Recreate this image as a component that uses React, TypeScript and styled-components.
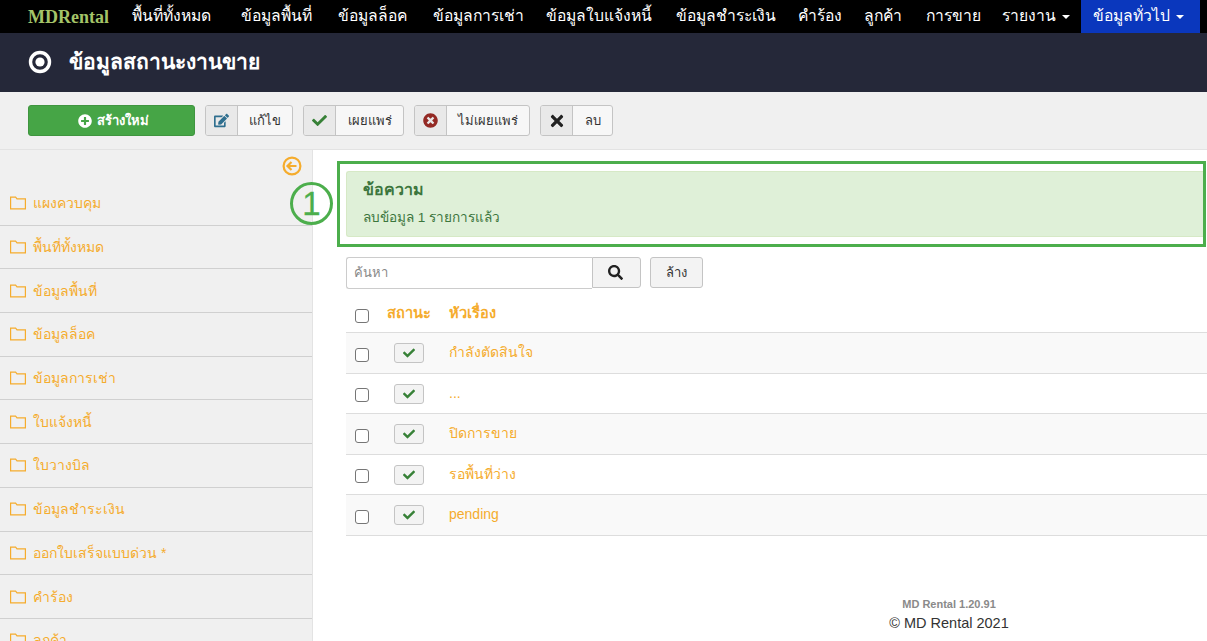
import styled, { createGlobalStyle } from "styled-components";
import { FaCheck, FaEdit, FaPlusCircle, FaSearch, FaTimes, FaTimesCircle } from "react-icons/fa";
import type { ReactNode } from "react";

const GlobalStyle = createGlobalStyle`
  html, body {
    margin: 0;
    height: 641px;
    overflow: hidden;
    background: #fff;
    font-family: "Liberation Sans", "Noto Sans", Arial, sans-serif;
    font-size: 13px;
    color: #333;
  }
  * { box-sizing: border-box; }
`;

const Page = styled.div`
  width: 1207px;
  height: 641px;
  overflow: hidden;
  display: flex;
  flex-direction: column;
`;

const NavBar = styled.nav`
  height: 33px;
  background: #000;
  display: flex;
  align-items: stretch;
  padding-left: 28px;
  flex: none;
`;

const Brand = styled.a`
  font-family: "Liberation Serif", serif;
  font-weight: 700;
  font-size: 18px;
  color: #a4c468;
  line-height: 35px;
  width: 92px;
`;

const NavItem = styled.a<{ $active?: boolean; $width: number }>`
  width: ${(p) => p.$width}px;
  color: #fff;
  font-size: 15.7px;
  line-height: 32px;
  white-space: nowrap;
  padding-left: ${(p) => (p.$active ? 12 : 11.5)}px;
  background: ${(p) => (p.$active ? "#0a37bd" : "transparent")};
`;

const Caret = styled.span`
  display: inline-block;
  margin-left: 6px;
  vertical-align: middle;
  border-top: 4px solid #fff;
  border-left: 4px solid transparent;
  border-right: 4px solid transparent;
`;

const TitleBar = styled.header`
  height: 59px;
  background: #252839;
  display: flex;
  align-items: center;
  padding: 0 0 2px 28px;
  gap: 17px;
  flex: none;
`;

const Title = styled.h1`
  margin: 0;
  font-size: 21px;
  font-weight: 700;
  color: #fff;
`;

const Toolbar = styled.div`
  height: 58px;
  background: #f0f0f0;
  border-bottom: 1px solid #e3e3e3;
  display: flex;
  align-items: center;
  padding-left: 28px;
  gap: 10px;
  flex: none;
`;

const CreateButton = styled.button`
  width: 167px;
  height: 31px;
  background: #46a546;
  border: 1px solid #3f953f;
  border-radius: 3px;
  color: #fff;
  font: 700 13px "Liberation Sans", sans-serif;
  display: flex;
  align-items: center;
  justify-content: center;
  gap: 5px;
  padding: 0 0 0 3px;
`;

const ActionButton = styled.button`
  height: 31px;
  display: flex;
  align-items: stretch;
  padding: 0;
  background: #f7f7f7;
  border: 1px solid #c4c4c4;
  border-radius: 3px;
  font: 13px "Liberation Sans", sans-serif;
  color: #333;
  overflow: hidden;
`;

const ActionIcon = styled.span<{ $color: string }>`
  width: 32px;
  background: #e9e9e9;
  border-right: 1px solid #c4c4c4;
  color: ${(p) => p.$color};
  display: flex;
  align-items: center;
  justify-content: center;
  font-size: 15px;
`;

const ActionLabel = styled.span<{ $width: number }>`
  width: ${(p) => p.$width}px;
  display: flex;
  align-items: center;
  justify-content: center;
`;

const Body = styled.div`
  flex: 1;
  display: flex;
  min-height: 0;
  position: relative;
`;

const Sidebar = styled.aside`
  width: 313px;
  flex: none;
  background: #f0f0f0;
  border-right: 1px solid #e3e3e3;
  position: relative;
  padding-top: 32px;
`;

const CollapseIcon = styled.svg`
  position: absolute;
  top: 6px;
  right: 10px;
`;

const SideItem = styled.a`
  height: 43.7px;
  display: flex;
  align-items: center;
  gap: 7px;
  padding-left: 10px;
  color: #f5ac2d;
  font-size: 14px;
  border-bottom: 1px solid #d0d0d0;
`;

const Main = styled.main`
  flex: 1;
  min-width: 0;
  padding: 11px 0 0 24px;
`;

const AlertFrame = styled.div`
  margin-right: 1px;
  border: 3px solid #4cae4c;
  padding: 7px 0 7px 6px;
`;

const Alert = styled.div`
  height: 66px;
  background: #dff0d8;
  border: 1px solid #d6e9c6;
  border-right: 0;
  border-radius: 3px 0 0 3px;
  color: #3c763d;
  padding: 8px 16px;
`;

const AlertTitle = styled.div`
  font-size: 16px;
  font-weight: 700;
  line-height: 20px;
  margin-bottom: 8px;
`;

const AlertText = styled.div`
  font-size: 13.6px;
  line-height: 20px;
`;

const Marker = styled.div`
  position: absolute;
  left: 290px;
  top: 32px;
  width: 43px;
  height: 43px;
  border: 3px solid #4cae4c;
  border-radius: 50%;
  color: #4cae4c;
  font-size: 33px;
  line-height: 37px;
  text-align: center;
  -webkit-text-stroke: 0.3px #4cae4c;
`;

const Content = styled.div`
  padding-left: 9px;
`;

const SearchRow = styled.div`
  display: flex;
  align-items: flex-start;
  margin-top: 10px;
`;

const SearchInput = styled.div`
  width: 246px;
  height: 32px;
  border: 1px solid #ccc;
  border-right: 0;
  border-radius: 3px 0 0 3px;
  color: #888;
  font-size: 13px;
  line-height: 30px;
  padding-left: 7px;
`;

const SearchButton = styled.button`
  width: 49px;
  height: 31px;
  background: #f3f3f3;
  border: 1px solid #c4c4c4;
  border-radius: 0 3px 3px 0;
  display: flex;
  align-items: center;
  justify-content: center;
  color: #222;
  font-size: 15px;
  padding: 0 2px 0 0;
`;

const ClearButton = styled.button`
  width: 53px;
  height: 31px;
  margin-left: 9px;
  background: #f3f3f3;
  border: 1px solid #c4c4c4;
  border-radius: 3px;
  font: 13px "Liberation Sans", sans-serif;
  color: #333;
  padding: 0;
`;

const Check = styled.span<{ $head?: boolean }>`
  display: block;
  width: 14px;
  height: 14px;
  margin: ${(p) => (p.$head ? "6px" : "3px")} 0 0 9px;
  background: #fff;
  border: 1px solid #767676;
  border-radius: 3px;
`;

const HeadRow = styled.div`
  height: 44px;
  display: grid;
  grid-template-columns: 41px 62px 1fr;
  align-items: center;
  border-bottom: 1px solid #ddd;
  padding-top: 4px;
  color: #f5ac2d;
  font-size: 14.6px;
  font-weight: 700;
`;

const Row = styled.div<{ $shaded?: boolean; $height: number }>`
  height: ${(p) => p.$height}px;
  display: grid;
  grid-template-columns: 41px 62px 1fr;
  align-items: center;
  border-bottom: 1px solid #ddd;
  background: ${(p) => (p.$shaded ? "#f9f9f9" : "#fff")};
  color: #f5ac2d;
  font-size: 14px;
`;

const RowTitle = styled.span`
  margin-bottom: 2px;
`;

const StateButton = styled.span`
  width: 30px;
  height: 20px;
  margin-left: 7px;
  background: #f3f3f3;
  border: 1px solid #c4c4c4;
  border-radius: 3px;
  color: #378137;
  font-size: 12px;
  display: flex;
  align-items: center;
  justify-content: center;
`;

const Footer = styled.footer`
  margin-top: 61px;
  padding-left: 354px;
  text-align: center;
`;

const Version = styled.div`
  font-size: 11px;
  font-weight: 700;
  color: #8a8a8a;
  line-height: 15px;
`;

const Copyright = styled.div`
  font-size: 14.5px;
  color: #333;
  line-height: 22px;
`;

const navItems = [
  { label: "พื้นที่ทั้งหมด", width: 109 },
  { label: "ข้อมูลพื้นที่", width: 97 },
  { label: "ข้อมูลล็อค", width: 95 },
  { label: "ข้อมูลการเช่า", width: 113 },
  { label: "ข้อมูลใบแจ้งหนี้", width: 130 },
  { label: "ข้อมูลชำระเงิน", width: 122 },
  { label: "คำร้อง", width: 66 },
  { label: "ลูกค้า", width: 62 },
  { label: "การขาย", width: 76 },
];
const sideItems = ["แผงควบคุม", "พื้นที่ทั้งหมด", "ข้อมูลพื้นที่", "ข้อมูลล็อค", "ข้อมูลการเช่า", "ใบแจ้งหนี้", "ใบวางบิล", "ข้อมูลชำระเงิน", "ออกใบเสร็จแบบด่วน *", "คำร้อง", "ลูกค้า"];
const rows = [
  { title: "กำลังตัดสินใจ", height: 41 },
  { title: "...", height: 40 },
  { title: "ปิดการขาย", height: 41 },
  { title: "รอพื้นที่ว่าง", height: 40 },
  { title: "pending", height: 41 },
];

function Action({ icon, color, label, width }: { icon: ReactNode; color: string; label: string; width: number }) {
  return (
    <ActionButton>
      <ActionIcon $color={color}>{icon}</ActionIcon>
      <ActionLabel $width={width}>{label}</ActionLabel>
    </ActionButton>
  );
}

function FolderIcon() {
  return (
    <svg width="16" height="14" viewBox="0 0 16 14" fill="none" stroke="#f5ac2d" strokeWidth="1.2">
      <path d="M.6 12.9V1.1h5l1.4 1.7h8.4v10.1z" />
    </svg>
  );
}

export default function App() {
  return (
    <Page>
      <GlobalStyle />
      <NavBar>
        <Brand>MDRental</Brand>
        {navItems.map((item) => (
          <NavItem key={item.label} $width={item.width}>
            {item.label}
          </NavItem>
        ))}
        <NavItem $width={91}>
          รายงาน<Caret />
        </NavItem>
        <NavItem $active $width={119}>
          ข้อมูลทั่วไป<Caret />
        </NavItem>
      </NavBar>
      <TitleBar>
        <svg width="24" height="24" viewBox="0 0 24 24">
          <circle cx="12" cy="12" r="9.5" fill="none" stroke="#fff" strokeWidth="3.4" />
          <circle cx="12" cy="12" r="4.6" fill="#fff" />
        </svg>
        <Title>ข้อมูลสถานะงานขาย</Title>
      </TitleBar>
      <Toolbar>
        <CreateButton>
          <FaPlusCircle size={14} />
          สร้างใหม่
        </CreateButton>
        <Action icon={<FaEdit />} color="#2f6f8f" label="แก้ไข" width={54} />
        <Action icon={<FaCheck />} color="#378137" label="เผยแพร่" width={67} />
        <Action icon={<FaTimesCircle />} color="#942a25" label="ไม่เผยแพร่" width={82} />
        <Action icon={<FaTimes size={18} />} color="#222" label="ลบ" width={39} />
      </Toolbar>
      <Body>
        <Sidebar>
          <CollapseIcon width="20" height="20" viewBox="0 0 20 20" fill="none" stroke="#f5ac2d" strokeWidth="2.2">
            <circle cx="10" cy="10" r="8.4" />
            <path d="M14.5 10H6M9.5 6 5.5 10l4 4" />
          </CollapseIcon>
          {sideItems.map((item) => (
            <SideItem key={item}>
              <FolderIcon />
              {item}
            </SideItem>
          ))}
        </Sidebar>
        <Marker>1</Marker>
        <Main>
          <AlertFrame>
            <Alert>
              <AlertTitle>ข้อความ</AlertTitle>
              <AlertText>ลบข้อมูล 1 รายการแล้ว</AlertText>
            </Alert>
          </AlertFrame>
          <Content>
            <SearchRow>
              <SearchInput>ค้นหา</SearchInput>
              <SearchButton>
                <FaSearch />
              </SearchButton>
              <ClearButton>ล้าง</ClearButton>
            </SearchRow>
            <HeadRow>
              <Check $head />
              <span>สถานะ</span>
              <span>หัวเรื่อง</span>
            </HeadRow>
            {rows.map((row, i) => (
              <Row key={row.title} $shaded={i % 2 === 0} $height={row.height}>
                <Check />
                <StateButton>
                  <FaCheck />
                </StateButton>
                <RowTitle>{row.title}</RowTitle>
              </Row>
            ))}
          </Content>
          <Footer>
            <Version>MD Rental 1.20.91</Version>
            <Copyright>© MD Rental 2021</Copyright>
          </Footer>
        </Main>
      </Body>
    </Page>
  );
}
